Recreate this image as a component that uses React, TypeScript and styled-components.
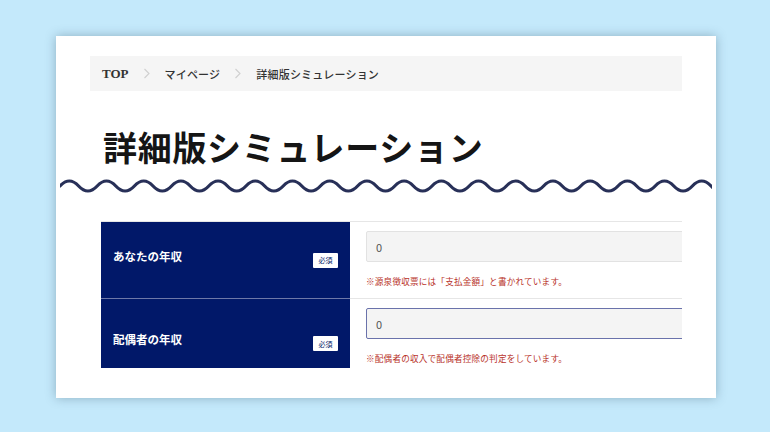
import React from "react";
import styled, { createGlobalStyle } from "styled-components";

const GlobalStyle = createGlobalStyle`
  html, body {
    margin: 0;
    padding: 0;
    background: #c4e9fb;
  }
  body {
    width: 770px;
    height: 432px;
    overflow: hidden;
    font-family: "Noto Sans CJK JP", "Noto Sans", sans-serif;
  }
`;

const NAVY = "#011869";

const Page = styled.div`
  width: 770px;
  height: 432px;
  padding: 36px 0 0 56px;
  box-sizing: border-box;
`;

const Card = styled.div`
  width: 660px;
  height: 362px;
  background: #fff;
  box-shadow: 0 0 10px rgba(40, 70, 90, 0.35);
  overflow: hidden;
  padding: 20px 34px 0;
  box-sizing: border-box;
  display: flex;
  flex-direction: column;
`;

const Breadcrumb = styled.nav`
  height: 35px;
  background: #f5f5f5;
  display: flex;
  align-items: center;
  padding-left: 12px;
  gap: 14px;
  font-family: "Liberation Serif", "Noto Sans CJK JP", serif;
  color: #333;
`;

const Crumb = styled.span<{ $latin?: boolean }>`
  font-size: ${(p) => (p.$latin ? "13px" : "11px")};
  font-weight: ${(p) => (p.$latin ? 600 : 500)};
  letter-spacing: ${(p) => (p.$latin ? "0" : "0.2px")};
`;

const Chevron = () => (
  <svg width="8" height="11" viewBox="0 0 8 11">
    <path d="M1.5 1 L6 5.5 L1.5 10" fill="none" stroke="#cfcfcf" strokeWidth="1.1" />
  </svg>
);

const Title = styled.h1`
  margin: 36px 0 0 13px;
  font-size: 34px;
  line-height: 40px;
  font-weight: 700;
  letter-spacing: 0.7px;
  color: #151515;
`;

const WaveBox = styled.div`
  margin: 9px -30px 0;
  height: 20px;
`;

const Wave = () => {
  const width = 652;
  const half = 18.6;
  let d = "M0 10";
  let x = 0;
  let first = true;
  while (x < width) {
    if (first) {
      d += ` Q${x + half / 2} 0 ${x + half} 10`;
      first = false;
    } else {
      d += ` T${x + half} 10`;
    }
    x += half;
  }
  return (
    <svg width={width} height="20" viewBox={`0 0 ${width} 20`}>
      <path d={d} fill="none" stroke="#283058" strokeWidth="3.2" strokeLinecap="round" />
    </svg>
  );
};

const TableClip = styled.div`
  margin: 25px 0 0 11px;
  width: 581px;
  height: 147px;
  overflow: hidden;
`;

const Table = styled.div`
  width: 660px;
  display: grid;
  grid-template-columns: 249px 1fr;
  border-top: 1px solid #e6e6e6;
`;

const HeadCell = styled.div<{ $h: number }>`
  height: ${(p) => p.$h}px;
  background: ${NAVY};
  border-bottom: 1px solid #6e78a8;
  display: flex;
  align-items: center;
  justify-content: space-between;
  padding: 0 12px 0 12px;
`;

const Label = styled.span`
  color: #fff;
  font-size: 11.5px;
  font-weight: 700;
  margin-top: -9px;
`;

const Badge = styled.span`
  width: 25px;
  height: 15px;
  background: #fff;
  color: ${NAVY};
  font-size: 7px;
  display: flex;
  align-items: center;
  justify-content: center;
  border-radius: 1px;
`;

const BodyCell = styled.div<{ $h: number; $top: number }>`
  height: ${(p) => p.$h}px;
  border-bottom: 1px solid #e6e6e6;
  padding: ${(p) => p.$top}px 0 0 16px;
  box-sizing: border-box;
`;

const Input = styled.div<{ $focus?: boolean }>`
  height: 31px;
  box-sizing: border-box;
  background: #f4f4f4;
  border: 1px solid ${(p) => (p.$focus ? "#6a72ab" : "#e2e2e2")};
  border-radius: 2px;
  display: flex;
  align-items: center;
  padding-left: 9px;
  font-size: 11px;
  color: #555;
`;

const Note = styled.p`
  margin: 13px 0 0;
  font-size: 8.6px;
  color: #b83229;
  letter-spacing: 0.2px;
`;

const rows = [
  { label: "あなたの年収", note: "※源泉徴収票には「支払金額」と書かれています。", h: 76, top: 9, focus: false },
  { label: "配偶者の年収", note: "※配偶者の収入で配偶者控除の判定をしています。", h: 89, top: 9, focus: true },
];

export default function App() {
  return (
    <>
      <GlobalStyle />
      <Page>
        <Card>
          <Breadcrumb>
            <Crumb $latin>TOP</Crumb>
            <Chevron />
            <Crumb>マイページ</Crumb>
            <Chevron />
            <Crumb>詳細版シミュレーション</Crumb>
          </Breadcrumb>
          <Title>詳細版シミュレーション</Title>
          <WaveBox>
            <Wave />
          </WaveBox>
          <TableClip>
            <Table>
              {rows.map((r) => (
                <React.Fragment key={r.label}>
                  <HeadCell $h={r.h}>
                    <Label>{r.label}</Label>
                    <Badge>必須</Badge>
                  </HeadCell>
                  <BodyCell $h={r.h + 1} $top={r.top}>
                    <Input $focus={r.focus}>0</Input>
                    <Note>{r.note}</Note>
                  </BodyCell>
                </React.Fragment>
              ))}
            </Table>
          </TableClip>
        </Card>
      </Page>
    </>
  );
}
